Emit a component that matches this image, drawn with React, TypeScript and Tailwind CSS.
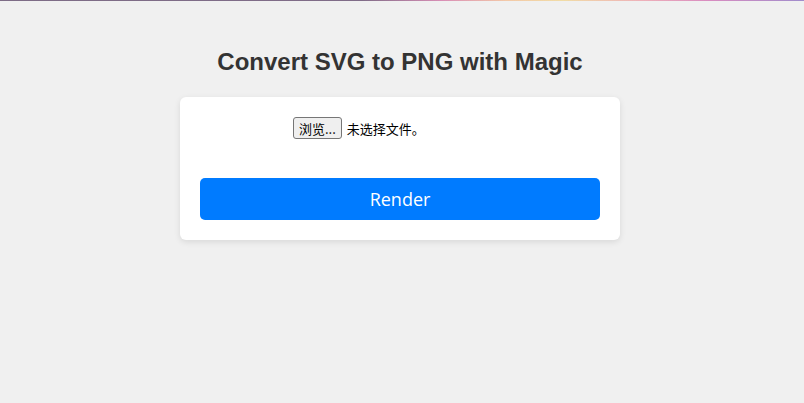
export default function App() {
  return (
    <div className="min-h-[403px] bg-[#f0f0f0] font-['Liberation_Sans',Arial,sans-serif]">
      {/* top gradient line */}
      <div className="h-px bg-[linear-gradient(90deg,#7d6c86_0%,#806c88_45%,#d98fb6_55%,#f3c9a8_63%,#f1dca6_70%,#eeb0b9_80%,#d98cc0_88%,#a08ccc_100%)]" />

      <div className="flex flex-col items-center pt-[47px] pr-[4px]">
        <h1 className="text-[24px] leading-[28px] font-bold text-[#333333]">
          Convert SVG to PNG with Magic
        </h1>

        <div className="mt-[21px] w-[440px] rounded-[6px] bg-white p-5 shadow-[0_2px_6px_rgba(0,0,0,0.1)]">
          <label className="flex cursor-pointer items-center pl-[93px] text-[13px] text-black font-['Noto_Sans_CJK_SC','Microsoft_YaHei',sans-serif]">
            <input type="file" accept=".svg" className="hidden" />
            <span className="flex h-[22px] items-center rounded-[3px] border border-[#767676] bg-[#efefef] px-[5px] leading-none">
              浏览...
            </span>
            <span className="ml-[5px] leading-none">未选择文件。</span>
          </label>

          <button className="mt-[39px] h-[42px] w-full rounded-[5px] bg-[#007bff] text-[18px] text-white font-['Open_Sans','Noto_Sans',sans-serif]">
            Render
          </button>
        </div>
      </div>
    </div>
  );
}
